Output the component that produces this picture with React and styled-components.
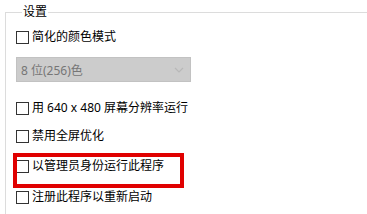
import React from "react";
import styled, { createGlobalStyle } from "styled-components";

const Global = createGlobalStyle`
  html, body { margin: 0; padding: 0; background: #ffffff; }
  body { width: 367px; height: 214px; overflow: hidden;
    font-family: "Noto Sans", "Noto Sans CJK SC", sans-serif; }
`;

const Group = styled.fieldset`
  margin: 4px 0 0 5px;
  padding: 0 0 0 10px;
  border: none;
  border-top: 1px solid #dcdcdc;
  border-left: 1px solid #dcdcdc;
  min-height: 220px;
  box-sizing: border-box;
`;

const Legend = styled.legend`
  margin-left: 6px;
  padding: 0 1px;
  font-size: 12px;
  line-height: 16px;
  color: #000;
`;

const Row = styled.label`
  position: relative;
  display: flex;
  align-items: center;
  gap: 3px;
  height: 16px;
  margin-top: ${(p) => p.$top}px;
  font-size: 12px;
  line-height: 16px;
  color: #000;
  white-space: nowrap;
`;

const Box = styled.span`
  width: 11px;
  height: 11px;
  border: 1px solid #333;
  background: #fff;
  flex: none;
`;

const Select = styled.div`
  display: flex;
  align-items: center;
  justify-content: space-between;
  box-sizing: border-box;
  width: 175px;
  height: 25px;
  margin-top: ${(p) => p.$top}px;
  padding: 0 6px 0 4px;
  background: #cccccc;
  border: 1px solid #c2c2c2;
  font-size: 12px;
  color: #767676;
`;

const Highlight = styled.span`
  position: absolute;
  left: -3px;
  top: -5px;
  width: 171px;
  height: 35px;
  box-sizing: border-box;
  border: 4px solid #e00000;
  pointer-events: none;
`;

const Check = ({ top, children, highlight }) => (
  <Row $top={top}>
    <Box />
    {children}
    {highlight && <Highlight />}
  </Row>
);

export default function App() {
  return (
    <>
      <Global />
      <Group>
        <Legend>设置</Legend>
        <Check top={9}>简化的颜色模式</Check>
        <Select $top={12}>
          <span>8 位(256)色</span>
          <svg width="10" height="6" viewBox="0 0 10 6">
            <path d="M1 1 L5 5 L9 1" fill="none" stroke="#b8b8b8" strokeWidth="1.2" />
          </svg>
        </Select>
        <Check top={18}>用 640 x 480 屏幕分辨率运行</Check>
        <Check top={12}>禁用全屏优化</Check>
        <Check top={14} highlight>以管理员身份运行此程序</Check>
        <Check top={15}>注册此程序以重新启动</Check>
      </Group>
    </>
  );
}
